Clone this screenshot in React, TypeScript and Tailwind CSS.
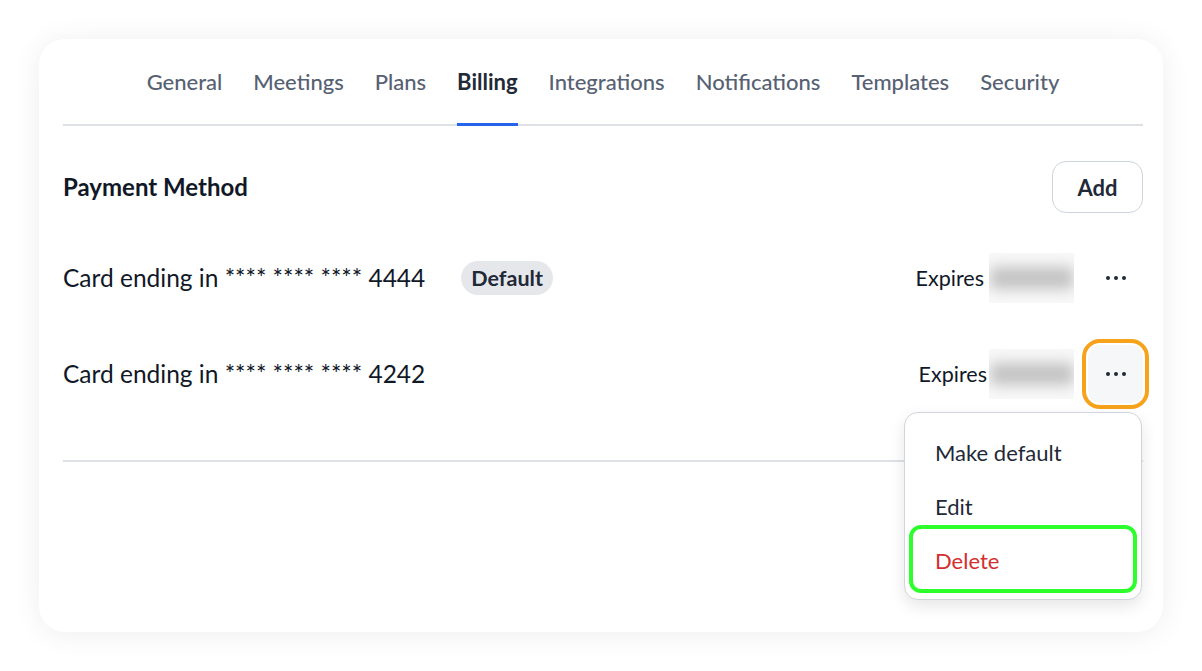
import React from 'react';

// Pestañas de la página de ajustes
const tabs = ['General', 'Meetings', 'Plans', 'Billing', 'Integrations', 'Notifications', 'Templates', 'Security'];

interface CardRowProps {
  last4: string;
  isDefault?: boolean;
  active?: boolean;
}

const Dots: React.FC = () => (
  <svg width="22" height="6" viewBox="0 0 22 6" fill="#1f2937">
    <circle cx="3" cy="3" r="2" />
    <circle cx="11" cy="3" r="2" />
    <circle cx="19" cy="3" r="2" />
  </svg>
);

/**
 * Fila de una tarjeta guardada, con la fecha de caducidad oculta
 * y el botón de acciones. La fila activa muestra el menú abierto.
 */
const CardRow: React.FC<CardRowProps> = ({ last4, isDefault, active }) => {
  return (
    <div className="flex h-[96px] items-center">
      <span className="text-[24.5px] text-[#111827]">Card ending in **** **** **** {last4}</span>
      {isDefault && (
        <span className="ml-[36px] rounded-full bg-[#e5e7eb] px-[10px] py-[1px] text-[21.5px] font-bold text-[#1f2937]">
          Default
        </span>
      )}
      <div className="ml-auto flex items-center">
        <span className={active ? 'ml-[3px] text-[21.5px] text-[#111827]' : 'text-[21.5px] text-[#111827]'}>Expires</span>
        <div className={active ? 'ml-[2px] flex h-[50px] w-[85px] items-center justify-center overflow-hidden bg-[#f8f8f8]' : 'ml-[5px] flex h-[50px] w-[85px] items-center justify-center overflow-hidden bg-[#f8f8f8]'}>
          <div className="h-[22px] w-[84px] rounded bg-[#c2c2c2] blur-[7px]" />
        </div>
        <div className="relative ml-[14px]">
          <button
            className={
              active
                ? 'flex h-[58px] w-[55px] items-center justify-center rounded-[12px] bg-[#f6f7f9] outline-[4px] outline-offset-[2px] outline-[#f7a21b] outline-solid'
                : 'flex h-[58px] w-[55px] items-center justify-center rounded-[12px]'
            }
          >
            <Dots />
          </button>
          {active && (
            <div className="absolute right-[1px] top-[67px] z-10 w-[238px] rounded-[14px] border border-[#d1d5db] bg-white py-[12px] shadow-[0_6px_16px_rgba(0,0,0,0.10)]">
              <div className="flex h-[54px] items-center px-[30px] text-[22px] text-[#1f2937]">Make default</div>
              <div className="flex h-[54px] items-center px-[30px] text-[22px] text-[#1f2937]">Edit</div>
              <div className="flex h-[54px] items-center px-[30px] text-[22px] text-[#d32f2f]">Delete</div>
              {/* Recuadro de resaltado sobre "Delete" */}
              <div className="absolute left-[4px] right-[4px] top-[112px] h-[68px] rounded-[12px] border-[4px] border-[#2cff2c]" />
            </div>
          )}
        </div>
      </div>
    </div>
  );
};

export default function App() {
  return (
    <div className="min-h-screen bg-white p-[39px] font-['Lato',sans-serif]">
      <div className="h-[593px] rounded-[26px] bg-white pl-6 pr-5 shadow-[0_2px_30px_rgba(0,0,0,0.07)]">
        {/* Navegación de pestañas */}
        <nav className="flex h-[87px] justify-center gap-[31px] border-b-2 border-[#dde1e6]">
          {tabs.map((tab) => (
            <div key={tab} className="flex flex-col justify-end">
              <span
                className={
                  tab === 'Billing'
                    ? 'pb-[25px] text-[22px] font-bold text-[#1f2937]'
                    : 'pb-[25px] text-[22px] font-medium text-[#566173]'
                }
              >
                {tab}
              </span>
              <div className={tab === 'Billing' ? 'mb-[-2px] h-[3px] bg-[#2563eb]' : 'mb-[-2px] h-[3px]'} />
            </div>
          ))}
        </nav>

        {/* Sección de método de pago */}
        <section className="pt-[35px]">
          <div className="flex h-[52px] items-center justify-between">
            <h2 className="text-[24px] font-bold text-[#111827]">Payment Method</h2>
            <button className="h-[52px] w-[91px] rounded-[14px] border border-[#cfd4dc] text-[22px] font-bold text-[#1f2937]">
              Add
            </button>
          </div>
          <div className="pt-[17px]">
            <CardRow last4="4444" isDefault />
            <CardRow last4="4242" active />
          </div>
          <div className="mt-[38px] h-[2px] bg-[#dde1e6]" />
        </section>
      </div>
    </div>
  );
}
